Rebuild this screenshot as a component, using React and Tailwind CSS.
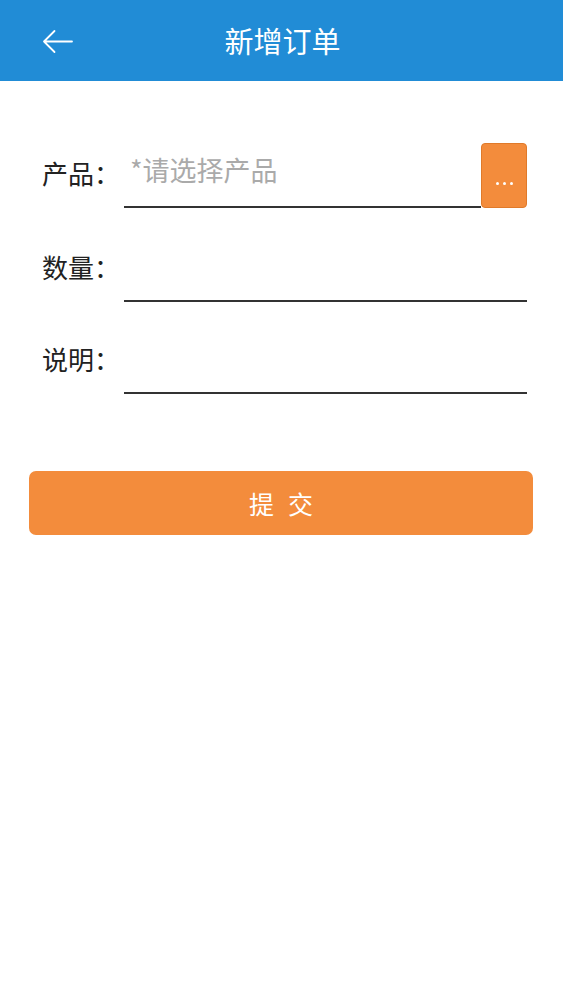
import React from 'react';

const font = { fontFamily: '"Noto Sans CJK SC", "Noto Sans", sans-serif' };

function Row({ label, children, className = '' }) {
  return (
    <div className={`flex items-end ${className}`}>
      <div className="w-[82px] pl-[42px] shrink-0 box-content text-[26px] leading-none text-[#222] pb-[22px] whitespace-nowrap">
        {label}
      </div>
      {children}
    </div>
  );
}

export default function App() {
  return (
    <div className="w-[563px] h-[1000px] bg-white" style={font}>
      {/* Title bar */}
      <div className="h-[81px] bg-[#218cd6] relative flex items-center justify-center">
        <button className="absolute left-[42px] top-[29px] w-[31px] h-[25px]">
          <svg viewBox="0 0 31 25" width="31" height="25" fill="none" stroke="white" strokeWidth="1.8" strokeLinecap="round" strokeLinejoin="round">
            <path d="M30 12.5H2M12.5 2L2 12.5 12.5 23" />
          </svg>
        </button>
        <h1 className="text-white text-[29px] leading-none pl-[2px]">新增订单</h1>
      </div>

      {/* Form */}
      <div className="pt-[62px] pr-[36px]">
        <Row label="产品：">
          <div className="flex-1 flex items-end">
            <div className="flex-1 h-[65px] border-b-2 border-[#333] flex items-center pl-[6px] pb-[8px] text-[27px] text-[#aaa] whitespace-nowrap">
              *请选择产品
            </div>
            <button className="w-[46px] h-[65px] bg-[#f38c3c] border border-[#e07a2a] rounded-[4px] flex items-end justify-center pb-[22px] gap-[4px]">
              <span className="w-[3px] h-[3px] rounded-full bg-white" />
              <span className="w-[3px] h-[3px] rounded-full bg-white" />
              <span className="w-[3px] h-[3px] rounded-full bg-white" />
            </button>
          </div>
        </Row>

        <Row label="数量：" className="mt-[29px]">
          <div className="flex-1 h-[65px] border-b-2 border-[#333]" />
        </Row>

        <Row label="说明：" className="mt-[27px]">
          <div className="flex-1 h-[65px] border-b-2 border-[#333]" />
        </Row>
      </div>

      {/* Submit */}
      <div className="pl-[29px] pr-[30px] mt-[77px]">
        <button className="w-full h-[64px] bg-[#f38c3c] rounded-[7px] text-white text-[25px] leading-none tracking-[14px] pl-[14px]">
          提交
        </button>
      </div>
    </div>
  );
}
